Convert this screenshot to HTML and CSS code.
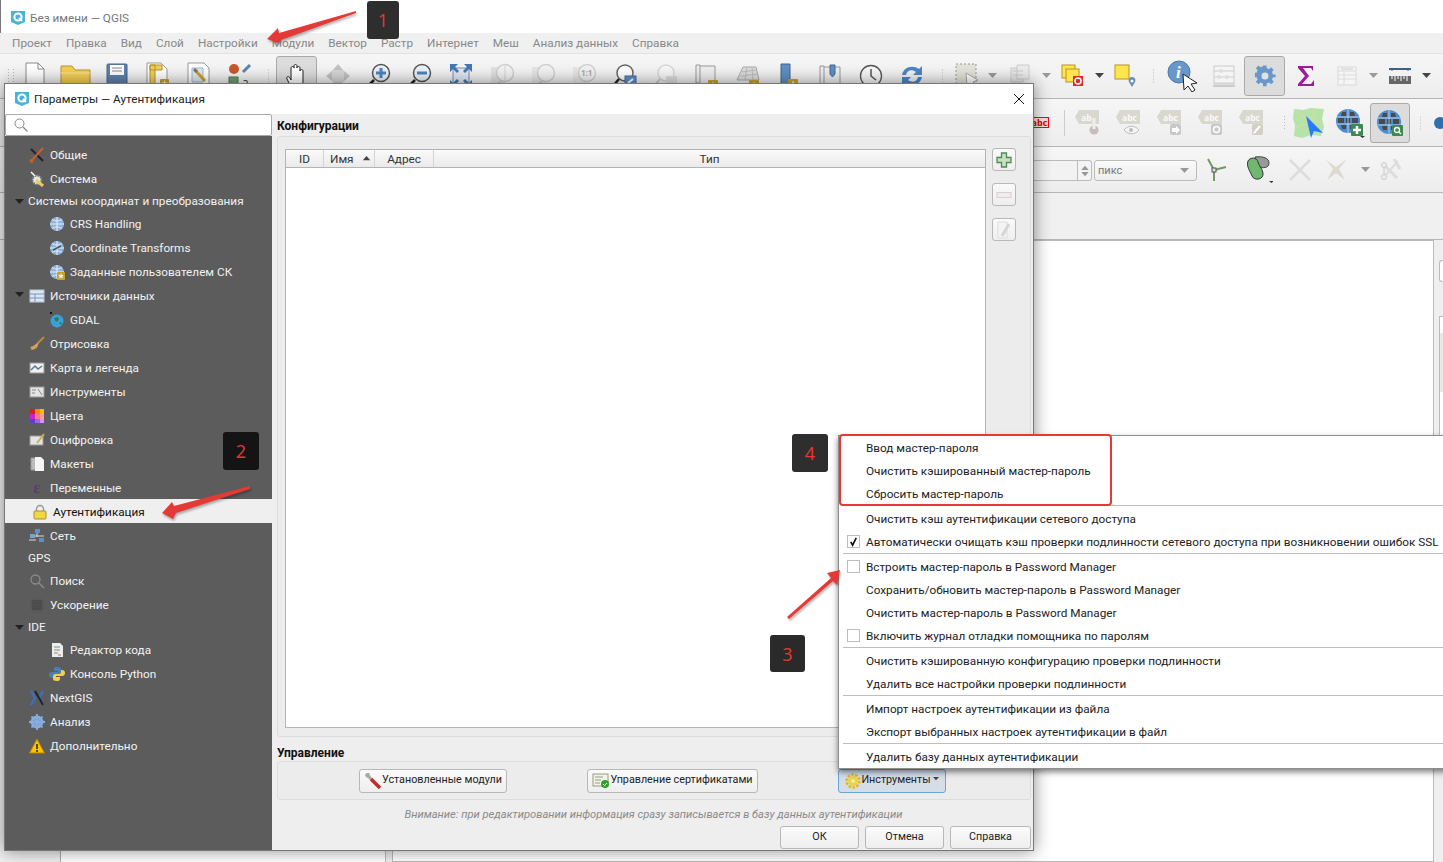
FILE: index.html
```html
<!DOCTYPE html>
<html lang="ru">
<head>
<meta charset="utf-8">
<title>Без имени — QGIS</title>
<link rel="stylesheet" href="styles.css">
</head>
<body>
<svg class="defs" width="0" height="0">
  <defs>
    <symbol id="q" viewBox="0 0 16 16"><path d="M1 1h14v11l-7 3-7-3z" fill="#4bb3d8"/><circle cx="8" cy="7" r="3.6" fill="none" stroke="#fff" stroke-width="2"/><path d="M9 8l3 3" stroke="#fff" stroke-width="2"/></symbol>
    <symbol id="star" viewBox="0 0 10 10"><rect width="10" height="10" rx="1" fill="#c9a227"/><path d="M5 1.5l1 2.3 2.5.2-1.9 1.6.6 2.4L5 6.8 2.800 8l.6-2.400L1.500 4l2.500-.2z" fill="#fff"/></symbol>
    <symbol id="globe" viewBox="0 0 16 16"><circle cx="8" cy="8" r="7" fill="#8fb4dc"/><path d="M1 8h14M8 1v14M3 3.500c3 2 7 2 10 0M3 12.500c3-2 7-2 10 0" stroke="#e8eef6" fill="none"/></symbol>
    <symbol id="bigglobe" viewBox="0 0 26 26"><circle cx="13" cy="13" r="12" fill="#4d8ccc"/><path d="M7 4h4v4H6zM15 4h4l1 4h-5zM3 10h6v5H3zM11 10h4v5h-4zM17 10h6v5h-6zM6 17h5v4H7zM15 17h5l-1 4h-4z" fill="#4a4a4a"/><path d="M2 9h22M2 16h22M13 1v24" stroke="#d8e6f5" stroke-width=".7"/></symbol>
    <symbol id="absTag" viewBox="0 0 24 14"><path d="M4 0h20v14H4L0 7z" fill="#d8d8cf"/></symbol>
    <symbol id="caret" viewBox="0 0 9 6"><path d="M0 0h9L4.500 5z" fill="currentColor"/></symbol>
  </defs>
</svg>

<div class="app">
  <div class="screen-strip"></div>
  <header class="titlebar">
    <svg class="logo" viewBox="0 0 16 16"><use href="#q"/></svg>
    <span>Без имени — QGIS</span>
  </header>
  <nav class="menubar">
    <span>Проект</span><span>Правка</span><span>Вид</span><span>Слой</span><span>Настройки</span><span>Модули</span><span>Вектор</span><span>Растр</span><span>Интернет</span><span>Меш</span><span>Анализ данных</span><span>Справка</span>
  </nav>

  <div class="toolbar row1">
    <i class="grip g8"></i>
    <b class="tb"><svg width="22" height="28" viewBox="0 0 22 28"><path d="M2 1h12l6 6v20H2z" fill="#fff" stroke="#8a8a8a"/><path d="M14 1v6h6" fill="none" stroke="#8a8a8a"/></svg></b>
    <b class="tb"><svg width="31" height="26" viewBox="0 0 31 26"><path d="M1 25V3h11l3 4h15v18z" fill="#f4cf55" stroke="#b8952c"/><path d="M1 10h29" stroke="#fbe79a"/></svg></b>
    <b class="tb"><svg width="22" height="26" viewBox="0 0 22 26"><rect x="1" y="1" width="20" height="24" rx="1" fill="#5f83ad" stroke="#44658c"/><rect x="4" y="2" width="14" height="10" fill="#fff"/><path d="M6 5h10M6 8h10" stroke="#888"/></svg></b>
    <b class="tb"><svg width="24" height="28" viewBox="0 0 24 28"><path d="M1 1h14l6 6v20H1z" fill="#fff" stroke="#999"/><path d="M4 3h5v20H4zM4 3h12v5H4z" fill="#f1cf5a" stroke="#b8952c"/><use href="#star" x="14" y="17" width="9" height="9"/></svg></b>
    <b class="tb"><svg width="24" height="28" viewBox="0 0 24 28"><path d="M1 1h16l5 5v21H1z" fill="#fff" stroke="#999"/><path d="M5 6h11v14H5z" fill="#dfe8f2" stroke="#a5b5c8"/><path d="M8 8l10 11" stroke="#c9a227" stroke-width="3"/><path d="M7 7l3 3" stroke="#777" stroke-width="3"/></svg></b>
    <b class="tb"><svg width="24" height="26" viewBox="0 0 24 26"><circle cx="6" cy="6" r="5" fill="#c9582b"/><path d="M15 9l7-7" stroke="#5b84b1" stroke-width="3"/><rect x="1" y="14" width="9" height="9" fill="#6f9d74" stroke="#4f7c55"/><text x="14" y="24" class="svgtext">a</text></svg></b>
    <i class="grip g16"></i>
    <b class="tb on"><svg width="22" height="27" viewBox="0 0 22 27"><path d="M6 26l-5-10c-1-3 2-3 3-1l1 2V5c0-2 3-2 3 0V3c0-2 3-2 3 0v2c0-2 3-2 3 0v3c0-2 3-2 3 0v10c0 3-1 5-2 8z" fill="#fff" stroke="#222"/></svg></b>
    <b class="tb"><svg width="26" height="26" viewBox="0 0 26 26"><rect x="7" y="7" width="12" height="12" fill="#d6d6d6"/><path d="M13 1l5 6H8zM13 25l-5-6h10zM1 13l6-5v10zM25 13l-6 5V8z" fill="#c2c2c2"/></svg></b>
    <b class="tb"><svg width="27" height="26" viewBox="0 0 27 26"><circle cx="16" cy="10" r="8.500" fill="#eaf1f8" stroke="#555" stroke-width="1.500"/><path d="M16 5v10M11 10h10" stroke="#4f82bd" stroke-width="3"/><path d="M9 17l-7 7" stroke="#222" stroke-width="2.500"/></svg></b>
    <b class="tb"><svg width="27" height="26" viewBox="0 0 27 26"><circle cx="16" cy="10" r="8.500" fill="#eaf1f8" stroke="#555" stroke-width="1.500"/><path d="M11 10h10" stroke="#4f82bd" stroke-width="3"/><path d="M9 17l-7 7" stroke="#222" stroke-width="2.500"/></svg></b>
    <b class="tb"><svg width="24" height="26" viewBox="0 0 24 26"><rect x="4" y="5" width="16" height="16" fill="#dfe8f2" stroke="#88a"/><path d="M1 1h8L6 4l4 4-2 2-4-4-3 3zM23 1v8l-3-3-4 4-2-2 4-4-3-3zM1 25v-8l3 3 4-4 2 2-4 4 3 3zM23 25h-8l3-3-4-4 2-2 4 4 3-3z" fill="#3f78b8"/></svg></b>
    <b class="tb"><svg width="26" height="26" viewBox="0 0 26 26"><rect x="2" y="4" width="14" height="16" fill="#e2e2e2"/><circle cx="16" cy="10" r="8.500" fill="#f2f2f2" stroke="#cfcfcf" stroke-width="1.500"/><path d="M16 2v16" stroke="#d5d5d5"/><path d="M6 24l6-6" stroke="#ccc" stroke-width="2"/></svg></b>
    <b class="tb"><svg width="26" height="26" viewBox="0 0 26 26"><rect x="2" y="4" width="14" height="16" fill="#e6e6e6"/><circle cx="16" cy="10" r="8.500" fill="#f2f2f2" stroke="#cfcfcf" stroke-width="1.500"/><path d="M6 24l6-6" stroke="#ccc" stroke-width="2"/></svg></b>
    <b class="tb"><svg width="26" height="26" viewBox="0 0 26 26"><rect x="2" y="4" width="14" height="16" fill="#e6e6e6"/><circle cx="16" cy="10" r="8.500" fill="#f2f2f2" stroke="#cfcfcf" stroke-width="1.500"/><text x="10" y="13" class="svgtext small grey">1:1</text></svg></b>
    <b class="tb"><svg width="26" height="26" viewBox="0 0 26 26"><circle cx="13" cy="10" r="8" fill="#fff" stroke="#666" stroke-width="1.500"/><path d="M7 16l-6 7" stroke="#222" stroke-width="2.500"/><rect x="13" y="13" width="11" height="10" fill="#5f8fc4" stroke="#3f6c9e"/><path d="M16 20l5-4" stroke="#fff" stroke-width="2"/></svg></b>
    <b class="tb"><svg width="26" height="26" viewBox="0 0 26 26"><circle cx="13" cy="10" r="8" fill="#f6f6f6" stroke="#d6d6d6" stroke-width="1.500"/><path d="M7 16l-6 7" stroke="#ccc" stroke-width="2"/><rect x="13" y="13" width="11" height="10" fill="#ddd"/></svg></b>
    <b class="tb"><svg width="24" height="27" viewBox="0 0 24 27"><path d="M1 2h4v18H1zM5 3h15v18H5" fill="#eee" stroke="#999"/><use href="#star" x="13" y="17" width="10" height="10"/></svg></b>
    <b class="tb"><svg width="24" height="27" viewBox="0 0 24 27"><path d="M7 4h13l3 13H1z" fill="#ddd" stroke="#aaa"/><path d="M6 9l14-2M5 13l16-2M11 4l-2 13M16 4l1 13" stroke="#bbb"/><use href="#star" x="13" y="17" width="10" height="10"/></svg></b>
    <b class="tb"><svg width="20" height="27" viewBox="0 0 20 27"><path d="M2 1h9v22l-4 3-5-3z" fill="#5f8fc4" stroke="#41658d"/><use href="#star" x="9" y="16" width="10" height="10"/></svg></b>
    <b class="tb"><svg width="22" height="24" viewBox="0 0 22 24"><path d="M1 2h4v18H1zM5 3h16v18H5" fill="#eee" stroke="#999"/><path d="M11 1h5v9l-2.500 3L11 10z" fill="#5f8fc4" stroke="#41658d"/></svg></b>
    <b class="tb"><svg width="24" height="24" viewBox="0 0 24 24"><circle cx="12" cy="12" r="10.500" fill="#f7f7f7" stroke="#555" stroke-width="1.300"/><path d="M12 5v7l5 4" fill="none" stroke="#555" stroke-width="1.500"/></svg></b>
    <b class="tb"><svg width="24" height="24" viewBox="0 0 24 24"><path d="M2 11C3 4 12 0 19 5l3-3v9h-9l3-3C12 5 7 6 6 11zM22 13c-1 7-10 11-17 6l-3 3v-9h9l-3 3c4 3 9 2 10-3z" fill="#4c86c6"/></svg></b>
    <i class="grip g20"></i>
    <b class="tb w30"><svg width="24" height="26" viewBox="0 0 24 26"><rect x="1" y="1" width="20" height="20" fill="#e3e3d9" stroke="#999" stroke-dasharray="2 2"/><path d="M11 10l12 7-5 2 3 5-2 1-3-5-4 3z" fill="#fff" stroke="#aaa"/></svg></b>
    <b class="tb w20 arrowbtn"><svg class="car light" viewBox="0 0 9 6"><use href="#caret"/></svg></b>
    <b class="tb w36"><svg width="20" height="24" viewBox="0 0 20 24"><path d="M1 4h12v14H1z" fill="#e8e8e8" stroke="#ccc"/><path d="M7 1h12v14H7z" fill="#ececec" stroke="#ccc"/><path d="M3 7h10M3 11h10" stroke="#ccc"/></svg></b>
    <b class="tb w16 arrowbtn"><svg class="car light" viewBox="0 0 9 6"><use href="#caret"/></svg></b>
    <b class="tb w36"><svg width="22" height="24" viewBox="0 0 22 24"><rect x="1" y="1" width="13" height="13" fill="#ffe64c" stroke="#b8932c"/><rect x="5" y="5" width="13" height="13" fill="#ffe64c" stroke="#b8932c"/><rect x="12" y="12" width="10" height="10" fill="#d32f2f"/><circle cx="17" cy="17" r="3" fill="none" stroke="#fff" stroke-width="1.500"/></svg></b>
    <b class="tb w18 arrowbtn"><svg class="car" viewBox="0 0 9 6"><use href="#caret"/></svg></b>
    <b class="tb w36"><svg width="24" height="24" viewBox="0 0 24 24"><rect x="1" y="1" width="14" height="14" fill="#ffe64c" stroke="#b8932c"/><path d="M18 13c3 0 4 3 3 5l-3 5-3-5c-1-2 0-5 3-5z" fill="#5f8fb4"/><circle cx="18" cy="17" r="1.500" fill="#fff"/></svg></b>
    <i class="grip g18"></i>
    <b class="tb"><svg width="32" height="32" viewBox="0 0 32 32"><circle cx="12" cy="12" r="11" fill="#6a97c9" stroke="#4d78a8"/><text x="9" y="18" class="svgtext info">i</text><path d="M16 14l14 9-6 1 4 6-3 2-4-6-4 4z" fill="#fff" stroke="#222"/></svg></b>
    <b class="tb"><svg width="22" height="22" viewBox="0 0 22 22"><rect x="1" y="1" width="20" height="18" fill="#f4f4f4" stroke="#ccc"/><path d="M1 6h20M1 12h20M1 18h20" stroke="#ccc"/><circle cx="8" cy="6" r="2" fill="#ddd"/><circle cx="14" cy="12" r="2" fill="#ddd"/><circle cx="6" cy="12" r="2" fill="#ddd"/><path d="M0 21h22" stroke="#ccc" stroke-width="2"/></svg></b>
    <b class="tb on"><svg width="22" height="22" viewBox="0 0 22 22"><path d="M9 1h4v3l3 1 2-2 3 3-2 2 1 3h3v3h-3l-1 3 2 2-3 3-2-2-3 1v3H9v-3l-3-1-2 2-3-3 2-2-1-3H0V9h2l1-3-2-2 3-3 2 2 3-1z" fill="#6a97c9" transform="scale(.9) translate(1 -.5)"/><circle cx="11" cy="11" r="3.500" fill="#e2e2e2"/></svg></b>
    <b class="tb"><svg width="18" height="22" viewBox="0 0 18 22"><path d="M1 1h15v5l-2-3H6l6 8-7 8h9l3-4v6H1v-2l7-8-7-8z" fill="#9c1a9c"/></svg></b>
    <b class="tb"><svg width="20" height="20" viewBox="0 0 20 20"><rect x="1" y="1" width="18" height="18" fill="#f5f5f5" stroke="#d8d8d8"/><path d="M1 5h18M1 9h18M1 13h18M7 5v14" stroke="#dcdcdc"/><path d="M4 3h12" stroke="#ccc"/></svg></b>
    <b class="tb w12 arrowbtn"><svg class="car light" viewBox="0 0 9 6"><use href="#caret"/></svg></b>
    <b class="tb"><svg width="22" height="16" viewBox="0 0 22 16"><path d="M0 1h22" stroke="#3f6085" stroke-width="2"/><path d="M3 0v3M19 0v3" stroke="#3f6085"/><rect x="0" y="8" width="22" height="8" fill="#666"/><path d="M3 8v3M6 8v5M9 8v3M12 8v5M15 8v3M18 8v5" stroke="#fff"/></svg></b>
    <b class="tb w12 arrowbtn"><svg class="car" viewBox="0 0 9 6"><use href="#caret"/></svg></b>
  </div>

  <div class="toolbar row2">
    <b class="tb w24 justify-start"><span class="abc">abc</span></b>
    <i class="vsep"></i>
    <b class="tb"><svg class="labelicon" viewBox="0 0 26 26"><use href="#absTag" width="24" height="14"/><text x="6" y="10.500" class="svgtext tag">ab</text><circle cx="19" cy="20" r="4.500" fill="#c8bcbc"/><rect x="17.500" y="8" width="3" height="11" fill="#eee"/></svg></b>
    <b class="tb"><svg class="labelicon" viewBox="0 0 26 26"><use href="#absTag" width="24" height="14"/><text x="6" y="10.500" class="svgtext tag">abc</text><path d="M8 20c4-5 11-5 15 0-4 5-11 5-15 0z" fill="#f5f5f5" stroke="#bbb"/><circle cx="15" cy="20" r="2" fill="#bbb"/></svg></b>
    <b class="tb"><svg class="labelicon" viewBox="0 0 26 26"><use href="#absTag" width="24" height="14"/><text x="6" y="10.500" class="svgtext tag">abc</text><rect x="13" y="14" width="11" height="11" rx="2" fill="#c8c8c8"/><path d="M15 18h4v-2l4 4-4 4v-2h-4z" fill="#fff"/></svg></b>
    <b class="tb"><svg class="labelicon" viewBox="0 0 26 26"><use href="#absTag" width="24" height="14"/><text x="6" y="10.500" class="svgtext tag">abc</text><rect x="13" y="14" width="11" height="11" rx="2" fill="#c8c8c8"/><circle cx="18.500" cy="19.500" r="3" fill="none" stroke="#fff" stroke-width="1.500"/></svg></b>
    <b class="tb"><svg class="labelicon" viewBox="0 0 26 26"><use href="#absTag" width="24" height="14"/><text x="6" y="10.500" class="svgtext tag">abc</text><rect x="13" y="14" width="11" height="11" rx="2" fill="#d0d0c8"/><path d="M15 23l6-7" stroke="#fff" stroke-width="2"/></svg></b>
    <i class="grip g16 right"></i>
    <b class="tb"><svg width="32" height="32" viewBox="0 0 32 32"><path d="M1 2l9 1 8-2 13 1-2 10 2 8-3 9-10-1-9 3-8-2 1-10-2-8z" fill="#b5e3a8"/><path d="M5 6l8 6 4 10M22 2l-4 9 10 5M3 20l7-3" stroke="#e6d9a0" fill="none"/><path d="M13 9l17 17-9-2-3 7z" fill="#2979ff"/></svg></b>
    <b class="tb"><svg width="30" height="30" viewBox="0 0 30 30"><use href="#bigglobe" width="26" height="26"/><rect x="16" y="16" width="12" height="12" rx="1" fill="#3d8a4f"/><path d="M22 18v8M18 22h8" stroke="#fff" stroke-width="2.500"/><path d="M25 28h5l-2.500 2z" fill="#333"/></svg></b>
    <b class="tb on w40"><svg width="28" height="28" viewBox="0 0 28 28"><use href="#bigglobe" width="26" height="26"/><rect x="16" y="16" width="11" height="11" rx="1" fill="#3d8a4f"/><circle cx="21" cy="21" r="2.500" fill="none" stroke="#fff" stroke-width="1.300"/><path d="M23 23l2 2" stroke="#fff" stroke-width="1.300"/></svg></b>
    <i class="grip g20"></i>
    <span class="bluecut"></span>
  </div>

  <div class="toolbar row3">
    <span class="field"></span>
    <span class="spin"><svg class="car tiny up" viewBox="0 0 9 6"><use href="#caret"/></svg><svg class="car tiny" viewBox="0 0 9 6"><use href="#caret"/></svg></span>
    <span class="combo"><span>пикс</span><svg class="car light" viewBox="0 0 9 6"><use href="#caret"/></svg></span>
    <b class="tb w37"><svg width="22" height="24" viewBox="0 0 22 24"><path d="M9 12L3 1M9 12l12-3M9 12v11" stroke="#6f9d5f" stroke-width="2"/><rect x="7" y="10" width="4" height="4" fill="#ddd" stroke="#555"/></svg></b>
    <b class="tb w49"><svg width="28" height="28" viewBox="0 0 28 28"><path d="M10 1c8-1 14 1 14 6s-6 6-12 3z" fill="#999" stroke="#444"/><path d="M3 5c2-4 9-4 10 1 1 4 4 6 5 11 1 7-9 8-11 3C5 15 1 10 3 5z" fill="#6fb86f" stroke="#333"/><path d="M24 25h5l-2.500 2z" fill="#333"/></svg></b>
    <b class="tb w34"><svg width="24" height="24" viewBox="0 0 24 24"><path d="M2 2l20 20M22 2L2 22" stroke="#ddd" stroke-width="2.500"/></svg></b>
    <b class="tb w40"><svg width="24" height="24" viewBox="0 0 24 24"><path d="M1 2l10 7L22 1l-8 10 6 11-9-7-9 7 6-11z" fill="#ddd9cf"/></svg></b>
    <b class="tb w16 arrowbtn"><svg class="car light" viewBox="0 0 9 6"><use href="#caret"/></svg></b>
    <b class="tb w36"><svg width="22" height="22" viewBox="0 0 22 22"><path d="M4 6v12l14-16" fill="none" stroke="#ddd" stroke-width="2"/><path d="M4 6l13 13M14 0l6 10" stroke="#ddd" stroke-width="3"/><circle cx="4" cy="6" r="2.500" fill="#eee" stroke="#ccc"/><circle cx="4" cy="18" r="2.500" fill="#eee" stroke="#ccc"/></svg></b>
  </div>

  <div class="toolbar row4"></div>

  <main class="workspace">
    <div class="dock-left"></div>
    <div class="panel-left"></div>
    <div class="splitter"></div>
    <div class="canvas"></div>
    <aside class="dock-right">
      <span class="dock-btn"></span>
      <span class="dock-panel"><span class="dock-shade"></span></span>
    </aside>
  </main>
</div>

<section class="dialog">
  <header class="dlg-title">
    <svg class="logo" viewBox="0 0 16 16"><use href="#q"/></svg>
    <span class="dlg-name">Параметры — Аутентификация</span>
    <svg class="close" viewBox="0 0 12 12"><path d="M1 1l10 10M11 1L1 11" stroke="#111" stroke-width="1"/></svg>
  </header>
  <div class="dlg-body">
    <div class="side">
      <div class="search"><svg width="14" height="14" viewBox="0 0 14 14"><circle cx="5.500" cy="5.500" r="4.500" fill="none" stroke="#888"/><path d="M9 9l4.500 4.500" stroke="#888" stroke-width="1.300"/></svg></div>
      <ul class="tree">
        <li class="row l1"><svg class="ic" viewBox="0 0 16 16"><path d="M2 2l12 12" stroke="#223" stroke-width="2"/><path d="M14 1L3 13" stroke="#c9602b" stroke-width="2"/><path d="M1 13l3 2" stroke="#c9602b" stroke-width="3"/></svg>Общие</li>
        <li class="row l1"><svg class="ic" viewBox="0 0 16 16"><circle cx="8" cy="9" r="4.500" fill="#e8e8e8" stroke="#777" stroke-width="2" stroke-dasharray="2 1"/><path d="M7 9l7 6" stroke="#e6cf5c" stroke-width="3"/><path d="M2 1l4 4" stroke="#fff" stroke-width="1.500"/></svg>Система</li>
        <li class="row group"><svg class="twist" viewBox="0 0 9 6"><use href="#caret"/></svg>Системы координат и преобразования</li>
        <li class="row l2"><svg class="ic" viewBox="0 0 16 16"><use href="#globe"/></svg>CRS Handling</li>
        <li class="row l2"><svg class="ic" viewBox="0 0 16 16"><use href="#globe"/><path d="M4 10l8-4" stroke="#456" stroke-width="1.500"/></svg>Coordinate Transforms</li>
        <li class="row l2"><svg class="ic" viewBox="0 0 16 16"><use href="#globe"/><use href="#star" x="8" y="8" width="8" height="8"/></svg>Заданные пользователем СК</li>
        <li class="row l1 has-twist"><svg class="twist" viewBox="0 0 9 6"><use href="#caret"/></svg><svg class="ic" viewBox="0 0 16 16"><rect x="1" y="2" width="14" height="12" fill="#dce6f2" stroke="#b6c7da"/><path d="M1 6h14M1 10h14M6 6v8" stroke="#7896b8"/></svg>Источники данных</li>
        <li class="row l2"><svg class="ic" viewBox="0 0 16 16"><circle cx="8" cy="9" r="6.500" fill="#39a0d8"/><path d="M5 6l4-1 1 3-3 2zM10 11l3-1-1 3z" fill="#2f7d4f"/><rect x="1" y="0" width="2" height="2" fill="#111"/></svg>GDAL</li>
        <li class="row l1"><svg class="ic" viewBox="0 0 16 16"><path d="M15 1L8 8" stroke="#b88a3c" stroke-width="2"/><path d="M9 7c1 3-2 7-7 7 1-1 0-2-1-3 3 0 5-3 8-4z" fill="#d5a25c"/></svg>Отрисовка</li>
        <li class="row l1"><svg class="ic" viewBox="0 0 16 16"><rect x="1" y="3" width="14" height="10" fill="#f1f1f1" stroke="#999"/><path d="M2 10l4-4 3 3 4-3" fill="none" stroke="#557aa5" stroke-width="1.500"/></svg>Карта и легенда</li>
        <li class="row l1"><svg class="ic" viewBox="0 0 16 16"><rect x="1" y="3" width="14" height="10" fill="#e4e4e4" stroke="#999"/><path d="M3 6h4M3 9h3M9 5l4 6" stroke="#888"/></svg>Инструменты</li>
        <li class="row l1"><svg class="ic" viewBox="0 0 16 16"><rect x="1" y="1" width="14" height="14" fill="#f77"/><rect x="1" y="1" width="5" height="5" fill="#c22"/><rect x="6" y="1" width="5" height="5" fill="#f80"/><rect x="11" y="1" width="4" height="5" fill="#fb0"/><rect x="1" y="6" width="5" height="5" fill="#c2c"/><rect x="11" y="6" width="4" height="5" fill="#f9a"/><rect x="1" y="11" width="5" height="4" fill="#54c"/><rect x="6" y="11" width="5" height="4" fill="#96e"/><rect x="11" y="11" width="4" height="4" fill="#c9e"/></svg>Цвета</li>
        <li class="row l1"><svg class="ic" viewBox="0 0 16 16"><rect x="1" y="4" width="13" height="9" fill="#e4e4e4" stroke="#999"/><path d="M8 11l7-9" stroke="#c9b24a" stroke-width="2"/></svg>Оцифровка</li>
        <li class="row l1"><svg class="ic" viewBox="0 0 16 16"><path d="M2 2h5v12H2z" fill="#bbb" stroke="#999"/><path d="M6 1h6l3 3v11H6z" fill="#f5f5f5"/></svg>Макеты</li>
        <li class="row l1"><span class="ic eps">ε</span>Переменные</li>
        <li class="row sel"><svg class="ic" viewBox="0 0 14 16"><path d="M3.500 8V5a3.500 3.500 0 0 1 7 0v3" fill="none" stroke="#999" stroke-width="1.500"/><rect x="1" y="7" width="12" height="8" rx="1" fill="#f0d845" stroke="#a89220"/></svg>Аутентификация</li>
        <li class="row l1"><svg class="ic" viewBox="0 0 16 16"><rect x="6" y="1" width="5" height="4" fill="#5f8fc4"/><rect x="1" y="6" width="5" height="4" fill="#7aa4d0"/><rect x="10" y="10" width="5" height="4" fill="#5f8fc4"/><path d="M0 12h7M8 5v4M6 8h9" stroke="#ddd"/></svg>Сеть</li>
        <li class="row group plain">GPS</li>
        <li class="row l1"><svg class="ic" viewBox="0 0 16 16"><circle cx="6.500" cy="6.500" r="4.500" fill="none" stroke="#8a8a8a" stroke-width="1.300"/><path d="M10 10l5 5" stroke="#8a8a8a" stroke-width="1.500"/></svg>Поиск</li>
        <li class="row l1"><svg class="ic" viewBox="0 0 16 16"><rect x="3" y="3" width="10" height="10" fill="#4a4a4a"/><path d="M1 5h14M1 8h14M1 11h14M5 1v14M8 1v14M11 1v14" stroke="#505050"/></svg>Ускорение</li>
        <li class="row group"><svg class="twist" viewBox="0 0 9 6"><use href="#caret"/></svg>IDE</li>
        <li class="row l2"><svg class="ic" viewBox="0 0 16 16"><path d="M3 1h8l3 3v11H3z" fill="#eee"/><path d="M5 5h6M5 8h6" stroke="#888"/><path d="M5 11h4" stroke="#7a9a5f"/><path d="M9 13h3" stroke="#c66"/></svg>Редактор кода</li>
        <li class="row l2"><svg class="ic" viewBox="0 0 16 16"><path d="M8 1C5 1 5 2 5 4v1h4v1H3C1 6 0 7 0 9s1 3 3 3h1v-2c0-1 1-2 2-2h4c1 0 2-1 2-2V3c0-1-1-2-4-2z" fill="#4a7fb5"/><path d="M8 15c3 0 3-1 3-3v-1H7v-1h6c2 0 3-1 3-3s-1-3-3-3h-1v2c0 1-1 2-2 2H6c-1 0-2 1-2 2v3c0 1 1 2 4 2z" fill="#f5cf4a"/></svg>Консоль Python</li>
        <li class="row l1"><svg class="ic" viewBox="0 0 16 16"><path d="M2 1l4 7-4 7M14 1l-4 7 4 7" fill="none" stroke="#3d6fc0" stroke-width="2.500"/><path d="M6 1l8 14" stroke="#222" stroke-width="2"/></svg>NextGIS</li>
        <li class="row l1"><svg class="ic" viewBox="0 0 16 16"><circle cx="8" cy="8" r="5" fill="none" stroke="#86aee0" stroke-width="3"/><path d="M8 0v16M0 8h16M2.500 2.500l11 11M13.500 2.500l-11 11" stroke="#86aee0" stroke-width="1.800"/></svg>Анализ</li>
        <li class="row l1"><svg class="ic" viewBox="0 0 16 16"><path d="M8 1l7.500 14H.5z" fill="#f7c600" stroke="#c87a00"/><path d="M8 6v5M8 12v2" stroke="#222" stroke-width="1.500"/></svg>Дополнительно</li>
      </ul>
    </div>
    <div class="pane">
      <h3 class="sect">Конфигурации</h3>
      <div class="group-box cfg">
        <div class="table">
          <div class="thead">
            <span class="th c-id">ID</span>
            <span class="th c-name">Имя<svg class="sort" viewBox="0 0 9 6"><path d="M0 5h9L4.500 0z" fill="#444"/></svg></span>
            <span class="th c-addr">Адрес</span>
            <span class="th c-type">Тип</span>
          </div>
        </div>
        <div class="side-btns">
          <button class="sq"><svg width="16" height="16" viewBox="0 0 16 16"><path d="M5.500 1h5v4.500H15v5h-4.500V15h-5v-4.500H1v-5h4.500z" fill="#c8e0c0" stroke="#4f8a55" stroke-width="1.300"/></svg></button>
          <button class="sq"><svg width="16" height="16" viewBox="0 0 16 16"><rect x="1" y="5.500" width="14" height="5" fill="#eee" stroke="#d9cfcf"/></svg></button>
          <button class="sq"><svg width="16" height="18" viewBox="0 0 16 18"><path d="M2 1h9v16H2z" fill="#f4f4f4" stroke="#ddd"/><path d="M6 15l7-12" stroke="#d5d5d5" stroke-width="3"/></svg></button>
        </div>
      </div>
      <h3 class="sect mgmt">Управление</h3>
      <div class="group-box tools">
        <button class="btn b-mod"><svg width="18" height="18" viewBox="0 0 18 18"><path d="M3 1c-2 1-2 3-1 4s3 1 4 0l1-1-2-1 1-1-1-1z" fill="#aaa"/><path d="M2 2l5 5" stroke="#aaa" stroke-width="3"/><path d="M7 7l9 9" stroke="#c42b2b" stroke-width="3.500"/></svg>Установленные модули</button>
        <button class="btn b-cert"><svg width="18" height="16" viewBox="0 0 18 16"><rect x="1" y="1" width="15" height="12" fill="#f2f2e8" stroke="#9a9a80"/><path d="M3 4h8M3 7h6M3 10h5" stroke="#8a8"/><circle cx="13" cy="11" r="4" fill="#2fa22f"/><path d="M11 11l1.500 1.500L15 10" stroke="#fff" fill="none"/></svg>Управление сертификатами</button>
        <button class="btn b-inst"><svg width="16" height="18" viewBox="0 0 16 16"><circle cx="8" cy="8" r="5" fill="#f0d040"/><circle cx="8" cy="8" r="6.500" fill="none" stroke="#e0b820" stroke-width="2.500" stroke-dasharray="2.500 1.500"/><circle cx="8" cy="8" r="2" fill="#fbeea0"/></svg>Инструменты<svg class="car mini" viewBox="0 0 9 6"><use href="#caret"/></svg></button>
      </div>
      <p class="note">Внимание: при редактировании информация сразу записывается в базу данных аутентификации</p>
      <div class="dlg-actions">
        <button class="btn act">ОК</button>
        <button class="btn act">Отмена</button>
        <button class="btn act wide">Справка</button>
      </div>
    </div>
  </div>
</section>

<div class="popup">
  <div class="mi">Ввод мастер-пароля</div>
  <div class="mi">Очистить кэшированный мастер-пароль</div>
  <div class="mi">Сбросить мастер-пароль</div>
  <hr class="ms">
  <div class="mi">Очистить кэш аутентификации сетевого доступа</div>
  <div class="mi"><span class="chk"><svg viewBox="0 0 12 12"><path d="M3 6.500L5 10l4-8" fill="none" stroke="#111" stroke-width="1.800"/></svg></span>Автоматически очищать кэш проверки подлинности сетевого доступа при возникновении ошибок SSL</div>
  <hr class="ms">
  <div class="mi"><span class="chk"></span>Встроить мастер-пароль в Password Manager</div>
  <div class="mi">Сохранить/обновить мастер-пароль в Password Manager</div>
  <div class="mi">Очистить мастер-пароль в Password Manager</div>
  <div class="mi"><span class="chk"></span>Включить журнал отладки помощника по паролям</div>
  <hr class="ms">
  <div class="mi">Очистить кэшированную конфигурацию проверки подлинности</div>
  <div class="mi">Удалить все настройки проверки подлинности</div>
  <hr class="ms">
  <div class="mi">Импорт настроек аутентификации из файла</div>
  <div class="mi">Экспорт выбранных настроек аутентификации в файл</div>
  <hr class="ms">
  <div class="mi">Удалить базу данных аутентификации</div>
</div>

<div class="redbox"></div>
<span class="num n1">1</span>
<span class="num n2">2</span>
<span class="num n3">3</span>
<span class="num n4">4</span>
<svg class="arrows" width="1443" height="862" viewBox="0 0 1443 862">
  <polygon points="267,39 278,28 279,33 356,11 356,13 281,40 278,43"/>
  <polygon points="162,513 172,502 174,506 250,486 250,489 176,513 173,519"/>
  <polygon points="840,570 827,573 831,578 787,617 789,619 833,581 837,585"/>
</svg>
</body>
</html>
```

FILE: styles.css
```css
* { box-sizing: border-box; }
html, body { margin: 0; padding: 0; }
body {
  width: 1443px; height: 862px; overflow: hidden; position: relative;
  background: #fff; color: #222;
  font: 11.750px/1.2 Roboto, "Open Sans", sans-serif;
}
.defs { position: absolute; }
ul { list-style: none; margin: 0; padding: 0; }
button { font: inherit; color: inherit; padding: 0; }
h3 { margin: 0; }

.app { display: flex; flex-direction: column; height: 862px; }
.screen-strip { height: 3px; background: #fff; border-left: 1px solid #777; }
.titlebar { height: 30px; display: flex; align-items: center; gap: 4px; padding-left: 9px; color: #777; background: #fff; border-left: 1px solid #777; }
.logo { width: 16px; height: 16px; flex: none; }
.menubar { height: 20px; display: flex; align-items: center; gap: 14px; padding-left: 12px; background: #f0f0f0; color: #888; }
.toolbar { display: flex; align-items: center; background: linear-gradient(#f6f6f6, #ededed); border-bottom: 1px solid #b5b5b5; overflow: hidden; flex: none; }
.row1 { height: 46px; padding-left: 6px; border-top: 1px solid #e2e2e2; }
.row2 { height: 48px; padding-left: 1034px; }
.row3 { height: 46px; padding-left: 1033px; }
.row4 { height: 47px; background: #f0f0f0; }
.tb { width: 41px; height: 40px; flex: none; display: flex; align-items: center; justify-content: center; font-weight: normal; }
.tb.on { background: #dcdcdc; border: 1px solid #aaa; border-radius: 3px; }
.w12 { width: 12px; } .w16 { width: 16px; } .w18 { width: 18px; } .w20 { width: 20px; } .w24 { width: 24px; }
.w30 { width: 30px; } .w34 { width: 34px; } .w36 { width: 36px; } .w37 { width: 37px; } .w40 { width: 40px; } .w49 { width: 49px; }
.justify-start { justify-content: flex-start; }
.grip { flex: none; height: 16px; background: radial-gradient(circle, #bbb 0.7px, transparent 1px) center / 3px 3px repeat-y; }
.g8 { width: 8px; background-position: left top; background-size: 5px 3px; background-repeat: repeat; }
.g16 { width: 16px; } .g18 { width: 18px; } .g20 { width: 20px; }
.grip.right { background-position: 11px 0; }
.car { width: 9px; height: 6px; color: #444; flex: none; }
.car.light { color: #999; }
.car.tiny { color: #999; display: block; width: 8px; height: 5px; }
.car.tiny.up { transform: rotate(180deg); margin-bottom: 2px; }
.car.mini { width: 6px; height: 4px; margin-left: 2px; margin-bottom: 4px; }
.svgtext { font: 12px "Open Sans", sans-serif; fill: #333; }
.svgtext.small { font-size: 8px; font-weight: 700; }
.svgtext.grey { fill: #aaa; }
.svgtext.info { font: italic 700 17px "Liberation Serif", serif; fill: #fff; }
.svgtext.tag { font-size: 8.500px; font-weight: 700; fill: #fafafa; }
.abc { display: block; margin-left: -4px; width: 19px; height: 11px; line-height: 10px; border: 1px solid #f00; background: #fdd; color: #d00; font: 700 9px/9px "Open Sans", sans-serif; text-align: center; }
.vsep { width: 1px; height: 26px; background: #ccc; margin: 0 2px 0 6px; flex: none; }
.labelicon { width: 26px; height: 26px; }
.bluecut { width: 12px; height: 12px; margin-left: 4px; border-radius: 50%; background: #2f6fb0; flex: none; }
.field { width: 45px; height: 21px; background: #f2f2f2; border: 1px solid #bbb; border-left: 0; flex: none; margin-top: 2px; }
.spin { width: 14px; height: 21px; border: 1px solid #bbb; border-left: 0; border-radius: 0 3px 3px 0; display: flex; flex-direction: column; align-items: center; justify-content: center; background: #f4f4f4; flex: none; margin: 2px 2px 0 0; }
.combo { width: 103px; height: 21px; border: 1px solid #bbb; border-radius: 3px; display: flex; align-items: center; justify-content: space-between; padding: 0 7px 0 3px; background: linear-gradient(#fafafa, #eee); color: #777; font-size: 11px; flex: none; margin-top: 2px; }
.workspace { flex: 1; display: flex; background: #fff; min-height: 0; }
.dock-left { width: 61px; background: #efefef; border-right: 1px solid #aaa; }
.panel-left { width: 325px; background: #fff; border-right: 1px solid #bbb; }
.splitter { width: 6px; background: #efefef; }
.canvas { width: 1042px; background: #fff; border: 1px solid #bbb; }
.dock-right { flex: 1; background: #efefef; padding: 20px 0 0 5px; display: flex; flex-direction: column; gap: 34px; }
.dock-btn { height: 22px; border: 1px solid #bbb; border-right: 0; border-radius: 3px 0 0 3px; background: #fff; }
.dock-panel { height: 450px; background: #fff; border: 1px solid #bbb; border-right: 0; padding-top: 16px; }
.dock-shade { display: block; height: 59px; background: #e8e8e4; }

.dialog { position: absolute; left: 4px; top: 83px; width: 1030px; height: 768px; background: #eee; border: 1px solid #777; display: flex; flex-direction: column; box-shadow: 0 0 16px rgba(0,0,0,.45); }
.dlg-title { height: 30px; background: #fff; display: flex; align-items: center; padding: 0 8px 0 9px; gap: 4px; flex: none; color: #222; }
.dlg-name { flex: 1; }
.close { width: 12px; height: 12px; }
.dlg-body { flex: 1; display: flex; min-height: 0; }
.side { width: 267px; flex: none; display: flex; flex-direction: column; }
.search { height: 22px; background: #fff; border: 1px solid #aaa; border-radius: 2px; padding: 3px 0 0 8px; flex: none; }
.tree { flex: 1; background: #5c5c5c; color: #f2f2f2; padding-top: 7px; }
.row { height: 24px; display: flex; align-items: center; position: relative; }
.group { height: 21px; padding-left: 23px; }
.l1 { padding-left: 24px; }
.l2 { padding-left: 44px; }
.ic { width: 16px; height: 16px; margin-right: 5px; flex: none; }
.twist { position: absolute; left: 10px; top: 8px; width: 9px; height: 6px; color: #222; }
.eps { color: #5a3d6e; font: 700 16px/16px "Liberation Serif", serif; text-align: center; }
.sel { background: #efefef; color: #111; padding: 2px 0 0 28px; margin-top: -1px; margin-bottom: 1px; }
.sel .ic { width: 14px; margin-right: 6px; }
.pane { flex: 1; display: flex; flex-direction: column; padding: 0 2px 0 5px; min-width: 0; }
.sect { font-size: 12px; line-height: 24px; height: 22px; color: #111; font-weight: 700; flex: none; }
.group-box { border: 1px solid #dcdcdc; border-radius: 3px; background: #ececec; }
.cfg { height: 601px; padding: 12px 14px 8px 7px; display: flex; gap: 6px; flex: none; }
.table { width: 701px; background: #fff; border: 1px solid #b4b4b4; flex: none; }
.thead { display: flex; height: 18px; background: linear-gradient(#fafafa, #eaeaea); border-bottom: 1px solid #b4b4b4; color: #333; }
.th { display: flex; align-items: center; justify-content: center; border-right: 1px solid #d4d4d4; position: relative; padding-top: 2px; }
.c-id { width: 38px; } .c-name { width: 51px; justify-content: flex-start; padding-left: 6px; } .c-addr { width: 59px; }
.c-type { flex: 1; border-right: 0; }
.sort { width: 9px; height: 5px; margin-left: 8px; margin-bottom: 3px; }
.side-btns { display: flex; flex-direction: column; gap: 12px; margin-top: -1px; }
.sq { width: 24px; height: 23px; border: 1px solid #b8b8b8; border-radius: 3px; background: linear-gradient(#fafafa, #eee); display: flex; align-items: center; justify-content: center; }
.mgmt { margin-top: 4px; height: 20px; line-height: 24px; }
.tools { height: 39px; display: flex; align-items: center; position: relative; padding-left: 81px; flex: none; }
.btn { height: 24px; border: 1px solid #b8b8b8; border-radius: 3px; background: linear-gradient(#fbfbfb, #eee); display: flex; align-items: center; justify-content: center; color: #222; flex: none; white-space: nowrap; font-size: 10.750px; }
.btn svg { flex: none; }
.b-mod { width: 148px; margin-right: 80px; }
.b-cert { width: 171px; margin-right: 80px; }
.b-inst { width: 108px; background: #d5dde6; border-color: #69a5d8; }
.note { margin: 7px 0 0; text-align: center; color: #8a8a8a; font-style: italic; font-size: 11.150px; line-height: 16px; flex: none; padding-right: 1px; }
.dlg-actions { display: flex; justify-content: flex-end; gap: 6px; margin-top: 3px; }
.act { width: 79px; height: 23px; }
.act.wide { width: 81px; }

.popup { position: absolute; left: 838px; top: 435px; width: 620px; height: 334px; background: #fff; border: 1px solid #8e8e8e; box-shadow: 0 3px 6px rgba(0,0,0,.5); color: #222; }
.mi { height: 23px; display: flex; align-items: center; padding: 1px 0 0 27px; position: relative; white-space: nowrap; }
.ms { margin: 0 0 1px 4px; border: 0; height: 1px; background: #bdbdbd; }
.chk { position: absolute; left: 8px; top: 5px; width: 13px; height: 13px; border: 1px solid #bdbdbd; background: #fff; display: block; }
.chk svg { display: block; width: 11px; height: 11px; }

.redbox { position: absolute; left: 839px; top: 434px; width: 273px; height: 72px; border: 2px solid #e53935; border-radius: 4px; }
.num { position: absolute; display: flex; align-items: center; justify-content: center; color: #e53935; font: 18px "Open Sans", sans-serif; border-radius: 3px; }
.n1 { left: 367px; top: 1px; width: 32px; height: 38px; background: #2e2e2e; }
.n2 { left: 223px; top: 432px; width: 36px; height: 38px; background: #141414; }
.n3 { left: 770px; top: 635px; width: 35px; height: 37px; background: #2a2a2a; }
.n4 { left: 792px; top: 434px; width: 36px; height: 38px; background: #2e2e2e; }
.arrows { position: absolute; left: 0; top: 0; pointer-events: none; }
.arrows polygon { fill: #e53935; filter: drop-shadow(1px 2px 1px rgba(0,0,0,.3)); }
```
